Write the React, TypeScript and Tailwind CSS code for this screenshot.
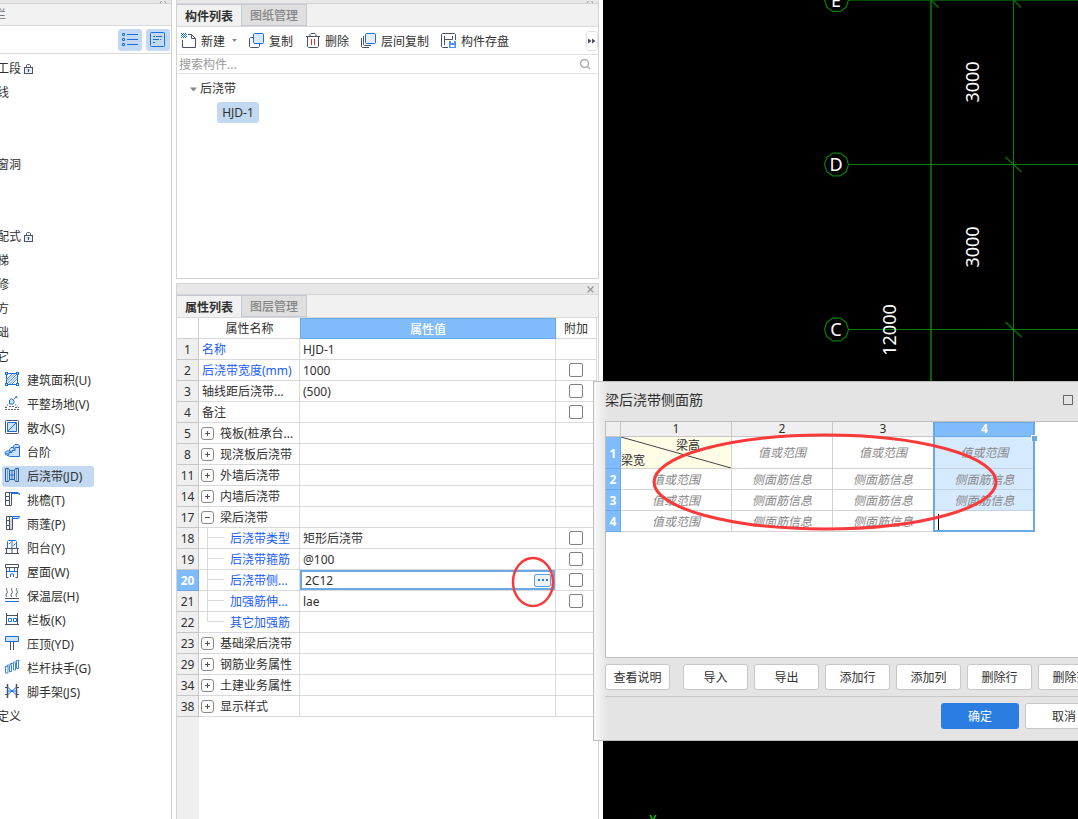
import React from "react";
import { clsx } from "clsx";

const BLUE = "#1a6fe0";
const SLATE = "#4a5068";

const Icon = ({ children }: { children: React.ReactNode }) => (
  <svg width="16" height="16" viewBox="0 0 16 16" fill="none" className="shrink-0" aria-hidden="true">
    {children}
  </svg>
);

const LockIcon = () => (
  <svg width="11" height="12" viewBox="0 0 11 12" fill="none" stroke={SLATE} className="ml-0.5 shrink-0" aria-hidden="true">
    <rect x="1.5" y="4.5" width="8" height="6" fill="#e8eefc" />
    <path d="M3.500 4.500V2.500l1-1h2l1 1v2M5.500 7v2" />
    <circle cx="5.500" cy="7" r="1" fill={SLATE} stroke="none" />
  </svg>
);

const AreaIcon = () => (
  <Icon>
    <path d="M2.500 2.500h11v11h-11z" stroke={BLUE} />
    <path d="M3 8l5-5M3 13L13 3M8 13l5-5M3 10.500l7.500-7.500M5.500 13l7.500-7.500" stroke={BLUE} strokeWidth="0.800" />
    <path d="M1 1h3v3H1zM12 1h3v3h-3zM1 12h3v3H1zM12 12h3v3h-3z" fill={BLUE} />
    <path d="M2 2h1v1H2zM13 2h1v1h-1zM2 13h1v1H2zM13 13h1v1h-1z" fill="#fff" />
  </Icon>
);

const GroundIcon = () => (
  <Icon>
    <path d="M13 1L9.500 4.500M11.500 1.500l2 1.500" stroke={BLUE} />
    <path d="M5.500 5l2-1.500 3 3-1.500 2.500H5.500z" stroke={BLUE} fill="#cfe2fb" />
    <path d="M4 9.500l-2.500 2M11 9.500l3.500 2.500" stroke={SLATE} strokeDasharray="1 1" />
    <path d="M5 11.500h5M1 12.500h3M11 12.500h4M1 14.500h14" stroke={SLATE} strokeDasharray="2 1" strokeWidth="0.900" />
  </Icon>
);

const ScatterIcon = () => (
  <Icon>
    <rect x="1.500" y="1.500" width="13" height="13" rx="1" stroke={SLATE} />
    <path d="M3.500 3.500h9v9h-9z" fill="#cfe2fb" stroke={BLUE} />
    <path d="M4 12l8-8" stroke={BLUE} />
  </Icon>
);

const StepsIcon = () => (
  <Icon>
    <path d="M1 9.500l1.500-1.500h3V6.500l1.500-2h2.500V3l1.500-1.500h3l1.500 1.500v10.500H6l-4.500-2z" fill="#cfe2fb" stroke={BLUE} />
    <path d="M1.500 10l3.500 1.500v-2h3V7.500h3V4.500h4M5.500 8l2.500 1.500M8.500 4.500l2.500 2" stroke={BLUE} />
  </Icon>
);

const StripIcon = () => (
  <Icon>
    <path d="M1.500 1.500h3l1 2v9l-1 2h-3zM14.500 1.500h-3l-1 2v9l1 2h3z" stroke="#2c5f96" />
    <path d="M3.500 2v12M12.500 2v12" stroke="#2c5f96" strokeOpacity=".5" />
    <path d="M5.500 3.500h5M5.500 8h5M5.500 12.500h5M8 3.500v9" stroke={BLUE} />
  </Icon>
);

const EavesIcon = () => (
  <Icon>
    <path d="M1.500 1.500h6v13h-6zM5.500 1.500v13M2 5.500h3.500M2 9.500h3.500" stroke={SLATE} />
    <path d="M7.500 1.500h6.500l2 2-2-1h-6.500z" stroke={BLUE} fill="#cfe2fb" />
  </Icon>
);

const CanopyIcon = () => (
  <Icon>
    <path d="M6 4h2v10H6z" fill="#d0d4dc" />
    <path d="M2.500 1.500h6v13h-6zM5.500 1.500v13M3 5.500h2.500M3 10.500h2.500" stroke={SLATE} />
    <path d="M8.500 1.500h7l-1 2h-6z" stroke={BLUE} fill="#cfe2fb" />
  </Icon>
);

const BalconyIcon = () => (
  <Icon>
    <path d="M3.500 9V2.500l1-1h7l1 1V9M8 1.500V9" stroke={BLUE} />
    <path d="M5 5l1.500-1.500M9.500 6.500l2-2" stroke={BLUE} />
    <path d="M1 9.500h14M2.500 9.500v5M8 9.500v5M13.500 9.500v5M1 14.500h14" stroke={SLATE} />
  </Icon>
);

const RoofIcon = () => (
  <Icon>
    <path d="M1.500 1.500h13v3h-13zM2.500 5v9.500h2M13.500 5v9.500h-2" stroke={SLATE} />
    <path d="M5.500 5v3M10.500 5v3M3 8.500h10M6.500 14v-3h3v3" stroke={BLUE} />
  </Icon>
);

const InsulationIcon = () => (
  <Icon>
    <path d="M3 1c-2 2 1.500 3 0 5s-1 3 0 4M8 1c-2 2 1.500 3 0 5s-1 3 0 4M13 1c-2 2 1.500 3 0 5s-1 3 0 4" stroke={SLATE} />
    <path d="M1 11.500h14" stroke={SLATE} />
    <path d="M1 14.500h14" stroke={BLUE} />
  </Icon>
);

const ParapetIcon = () => (
  <Icon>
    <path d="M2.500 2v11M13.500 2v11M2.500 4.500h11M1 13.500h14" stroke={SLATE} />
    <path d="M4.500 7.500h3v3h-3zM9.500 7.500h3v3h-3z" stroke={BLUE} />
  </Icon>
);

const CopingIcon = () => (
  <Icon>
    <path d="M1.500 1.500h13v5h-13z" stroke={BLUE} fill="#cfe2fb" />
    <path d="M6.500 7v8M9.500 7v8" stroke={SLATE} />
  </Icon>
);

const HandrailIcon = () => (
  <Icon>
    <path
      d="M1.500 7.500h2v-1.500h3V4.500h3V3h3V1.500h3M1.500 7.500v6.500h2.500V7M5.500 6.500v6h2V5.500M9.500 5v6h2V4M12.500 3v6.500h2V2"
      stroke="#3a86e8"
    />
  </Icon>
);

const ScaffoldIcon = () => (
  <Icon>
    <path d="M3.500 1v14M12.500 1v14" stroke={SLATE} strokeWidth="1.500" />
    <path d="M1 4.500h3M1 11.500h3M12 4.500h3M12 11.500h3" stroke={SLATE} />
    <path d="M4 4.500l8 7M12 4.500l-8 7M4 8h8" stroke={BLUE} />
  </Icon>
);

type NavEntry = { label: string; lock?: boolean };

// the tree is scrolled sideways, so only the tail of each group name shows
const groups: NavEntry[] = [
  { label: "工段", lock: true },
  { label: "线" },
  { label: "" },
  { label: "" },
  { label: "窗洞" },
  { label: "" },
  { label: "" },
  { label: "配式", lock: true },
  { label: "梯" },
  { label: "修" },
  { label: "方" },
  { label: "础" },
  { label: "它" },
];

const components = [
  { label: "建筑面积(U)", icon: <AreaIcon /> },
  { label: "平整场地(V)", icon: <GroundIcon /> },
  { label: "散水(S)", icon: <ScatterIcon /> },
  { label: "台阶", icon: <StepsIcon /> },
  { label: "后浇带(JD)", icon: <StripIcon />, active: true },
  { label: "挑檐(T)", icon: <EavesIcon /> },
  { label: "雨蓬(P)", icon: <CanopyIcon /> },
  { label: "阳台(Y)", icon: <BalconyIcon /> },
  { label: "屋面(W)", icon: <RoofIcon /> },
  { label: "保温层(H)", icon: <InsulationIcon /> },
  { label: "栏板(K)", icon: <ParapetIcon /> },
  { label: "压顶(YD)", icon: <CopingIcon /> },
  { label: "栏杆扶手(G)", icon: <HandrailIcon /> },
  { label: "脚手架(JS)", icon: <ScaffoldIcon /> },
];

const Sidebar = () => (
  <nav className="flex w-43 shrink-0 flex-col overflow-hidden border-r border-[#d0d0d0]">
    <div className="flex h-1 shrink-0 items-end justify-end border-b border-[#d4d4d4] bg-[#e8e8e8] pr-1">
      <svg width="8" height="2" viewBox="0 0 8 2" stroke="#999" aria-hidden="true">
        <path d="M2.500 0L1 2M5.500 0L7 2" />
      </svg>
    </div>
    <div className="flex h-[22px] shrink-0 items-center border-b border-[#d9d9d9] bg-[#f2f2f2] text-[#777]">
      <span className="-ml-1.5">栏</span>
    </div>
    <div className="flex h-7 shrink-0 items-center justify-end gap-1 border-b border-[#d9d9d9] pr-px">
      <button aria-label="列表" className="flex h-[22px] w-6 items-center justify-center rounded-[3px] bg-[#c2d9f1]">
        <Icon>
          <path d="M.5 1.500h2v2h-2zM.5 6.500h2v2h-2zM.5 11.500h2v2h-2z" stroke={BLUE} />
          <path d="M5 2.500h11M5 7.500h11M5 12.500h11" stroke={BLUE} />
        </Icon>
      </button>
      <button aria-label="详情" className="flex h-[22px] w-6 items-center justify-center rounded-[3px] bg-[#c2d9f1]">
        <Icon>
          <rect x=".5" y=".5" width="14" height="14" rx="1" stroke={BLUE} />
          <path d="M3 4.500h2M6 4.500h6M3 7.500h6M10 7.500h1M3 10.500h2" stroke={BLUE} />
        </Icon>
      </button>
    </div>
    <ul className="pt-[3px]">
      {groups.map((g, i) => (
        <li key={i} className="-ml-[3px] flex h-6 items-center">
          {g.label}
          {g.lock && <LockIcon />}
        </li>
      ))}
      {components.map((c) => (
        <li key={c.label} className="flex h-6 items-start pt-px pl-0.5">
          <button
            className={clsx(
              "flex h-[21px] items-start gap-[7px] rounded-[3px] pt-px pr-3 pl-0.5 leading-5",
              c.active && "bg-[#c2d9f1]"
            )}
          >
            {c.icon}
            {c.label}
          </button>
        </li>
      ))}
      <li className="-ml-[3px] flex h-6 items-center">定义</li>
    </ul>
  </nav>
);

const Tabs = ({ active, other }: { active: string; other: string }) => (
  <div className="flex h-[23px] shrink-0 border-b border-[#d9d9d9] bg-[#f1f1f1]" role="tablist">
    <button role="tab" aria-selected="true" className="w-16 border-t border-[#c4c9d2] pt-0.5 font-bold">
      {active}
    </button>
    <button
      role="tab"
      aria-selected="false"
      className="w-[66px] border border-[#c4c9d2] bg-[#dfdfdf] pt-0.5 font-medium text-[#858585]"
    >
      {other}
    </button>
  </div>
);

const ToolButton = ({ label, children }: { label: string; children: React.ReactNode }) => (
  <button className="flex shrink-0 items-center gap-1">
    <Icon>{children}</Icon>
    <span className="pt-0.5">{label}</span>
  </button>
);

const ComponentPanel = () => (
  <section className="flex h-[279px] shrink-0 flex-col border-x border-b border-[#d4d4d4]">
    <div className="flex h-1 shrink-0 items-end justify-end overflow-hidden border-b border-[#d4d4d4] bg-[#e8e8e8] pr-1">
      <svg width="8" height="2" viewBox="0 0 8 2" stroke="#999" aria-hidden="true">
        <path d="M2.500 0L1 2M5.500 0L7 2" />
      </svg>
    </div>
    <Tabs active="构件列表" other="图纸管理" />
    <div className="flex h-7 shrink-0 items-center border-b border-[#e2e2e2] pl-1">
      <div className="flex flex-1 items-center gap-3">
        <div className="flex items-center gap-[7px]">
          <ToolButton label="新建">
            <path d="M1.500 7v7.500h13V5.500l-4-4H7M10.500 1.500v4h4" stroke={SLATE} />
            <path d="M0 .5h6M0 2.500h6M0 4.500h6" stroke={BLUE} strokeDasharray="1 1" />
            <path d="M1 1.500h5M1 3.500h5" stroke={BLUE} strokeDasharray="1 1" />
          </ToolButton>
          <svg width="5" height="3" viewBox="0 0 5 3" aria-hidden="true">
            <path d="M0 0h5L2.500 3z" fill="#888" />
          </svg>
        </div>
        <ToolButton label="复制">
          <path d="M4 4.500H1.500l-1 1v8l1 1h8l1-1V11" stroke={SLATE} />
          <rect x="4.500" y=".5" width="10" height="10" rx="1" fill="#d9e7fd" stroke={BLUE} />
        </ToolButton>
        <ToolButton label="删除">
          <path d="M1 3.500h14M2.500 3.500v10l1 1h9l1-1v-10M5 3V1.500l1-1h4l1 1V3" stroke={SLATE} />
          <path d="M6.500 6v6M9.500 6v6" stroke="#e03030" />
        </ToolButton>
        <ToolButton label="层间复制">
          <path d="M.5 5v8.500l1 1H8M2.500 3v8.500l1 1H10" stroke={SLATE} />
          <rect x="4.500" y=".5" width="10" height="10" rx="1" fill="#e4eefe" stroke={BLUE} />
        </ToolButton>
        <ToolButton label="构件存盘">
          <path d="M7 14.500H1.500l-1-1v-12l1-1h12l1 1V7M3.500 3v9M3.500 6.500h8M11.500 3v3.500" stroke={SLATE} />
          <path d="M8 8h7v7H8z" fill="#4f93ea" />
          <path d="M10 8h3v2h-3zM9.500 12h4v2h-4z" fill="#fff" />
        </ToolButton>
      </div>
      <button aria-label="更多" className="flex h-5 w-3 items-center justify-center rounded-[3px] border border-[#e2e2e2]">
        <svg width="8" height="6" viewBox="0 0 8 6" fill={SLATE} className="shrink-0" aria-hidden="true">
          <path d="M0 .5L3.500 3 0 5.500zM4 .5L7.500 3 4 5.500z" />
        </svg>
      </button>
    </div>
    <div className="flex h-[19px] shrink-0 items-center border-b border-[#e2e2e2] pr-[7px] pl-0.5">
      <input
        aria-label="搜索构件"
        placeholder="搜索构件..."
        className="min-w-0 flex-1 bg-transparent pt-0.5 leading-4 outline-none placeholder:text-[#9a9a9a]"
      />
      <svg width="12" height="12" viewBox="0 0 12 12" fill="none" stroke="#a8a8a8" strokeWidth="1.400" aria-hidden="true">
        <circle cx="5.500" cy="5.500" r="4" />
        <path d="M8.500 8.500L11 11" />
      </svg>
    </div>
    <ul className="pt-[3px]">
      <li className="flex h-6 items-center gap-[3px] pl-[13px]">
        <svg width="7" height="5" viewBox="0 0 7 5" aria-hidden="true">
          <path d="M0 .5h7L3.500 4.500z" fill="#888" />
        </svg>
        后浇带
      </li>
      <li className="flex h-6 items-start pt-px pl-10">
        <button className="h-[21px] w-[42px] rounded-[3px] bg-[#c2d9f1]">HJD-1</button>
      </li>
    </ul>
  </section>
);

type Prop = {
  no: number;
  name: string;
  value?: string;
  kind?: "group" | "open" | "child" | "last";
  blue?: boolean;
  check?: boolean;
};

const props: Prop[] = [
  { no: 1, name: "名称", value: "HJD-1", blue: true },
  { no: 2, name: "后浇带宽度(mm)", value: "1000", blue: true, check: true },
  { no: 3, name: "轴线距后浇带...", value: "(500)", check: true },
  { no: 4, name: "备注", check: true },
  { no: 5, name: "筏板(桩承台...", kind: "group" },
  { no: 8, name: "现浇板后浇带", kind: "group" },
  { no: 11, name: "外墙后浇带", kind: "group" },
  { no: 14, name: "内墙后浇带", kind: "group" },
  { no: 17, name: "梁后浇带", kind: "open" },
  { no: 18, name: "后浇带类型", value: "矩形后浇带", kind: "child", blue: true, check: true },
  { no: 19, name: "后浇带箍筋", value: "@100", kind: "child", blue: true, check: true },
  { no: 20, name: "后浇带侧...", value: "2C12", kind: "child", blue: true, check: true },
  { no: 21, name: "加强筋伸...", value: "lae", kind: "child", blue: true, check: true },
  { no: 22, name: "其它加强筋", kind: "last", blue: true },
  { no: 23, name: "基础梁后浇带", kind: "group" },
  { no: 29, name: "钢筋业务属性", kind: "group" },
  { no: 34, name: "土建业务属性", kind: "group" },
  { no: 38, name: "显示样式", kind: "group" },
];

const Branch = ({ last }: { last?: boolean }) => (
  <svg width="28" height="20" viewBox="0 0 28 20" stroke="#d9d9d9" className="shrink-0" aria-hidden="true">
    <path d={last ? "M5.500 0v10" : "M5.500 0v20"} />
    <path d="M6 9.500h16" />
  </svg>
);

const Expander = ({ open }: { open: boolean }) => (
  <button
    aria-label={open ? "收起" : "展开"}
    className="mr-1.5 flex size-[13px] shrink-0 items-center justify-center rounded-[3px] border border-[#8a8a8a] bg-white"
  >
    <svg width="5" height="5" viewBox="0 0 5 5" stroke="#555" aria-hidden="true">
      <path d={open ? "M0 2.500h5" : "M0 2.500h5M2.500 0v5"} />
    </svg>
  </button>
);

const PropertyRow = ({ p }: { p: Prop }) => {
  const editing = p.no === 20;
  return (
    <tr className="h-[21px]">
      <th
        scope="row"
        className={clsx(
          "border-r border-b p-0 pt-0.5",
          editing ? "border-[#6aa9e6] bg-[#80bbfb] font-bold text-white" : "border-[#c6c6c6] bg-[#efefef] font-normal"
        )}
      >
        {p.no}
      </th>
      <td className="border-r border-b border-[#d9d9d9] p-0">
        <div
          className={clsx(
            "flex h-5 items-center whitespace-nowrap",
            p.blue && "text-[#1a5cff]",
            p.kind === "group" || p.kind === "open" ? "pl-0.5" : "pl-[3px]"
          )}
        >
          {(p.kind === "group" || p.kind === "open") && <Expander open={p.kind === "open"} />}
          {(p.kind === "child" || p.kind === "last") && <Branch last={p.kind === "last"} />}
          <span className="pt-0.5">{p.name}</span>
        </div>
      </td>
      <td className="border-r border-b border-[#d9d9d9] p-0">
        {editing ? (
          <div className="flex h-5 items-center border-2 border-[#6aa9e6] pr-0.5 pl-[3px]">
            <input
              aria-label="后浇带侧面筋"
              defaultValue={p.value}
              className="h-4 min-w-0 flex-1 pt-0.5 leading-4 outline-none"
            />
            <button
              aria-label="编辑"
              className="flex h-[13px] w-[17px] items-center justify-center rounded-[2px] border border-[#5a9fe6] bg-[#eef1f7]"
            >
              <svg width="10" height="2" viewBox="0 0 10 2" fill="#2b7de9" aria-hidden="true">
                <path d="M0 0h2v2H0zM4 0h2v2H4zM8 0h2v2H8z" />
              </svg>
            </button>
          </div>
        ) : (
          <div className="flex h-5 items-center pt-0.5 pl-[3px]">{p.value}</div>
        )}
      </td>
      <td className="border-r border-b border-[#d9d9d9] p-0">
        {p.check && (
          <input
            type="checkbox"
            aria-label={`附加 ${p.name}`}
            className="mx-auto block size-3.5 appearance-none rounded-[2px] border border-[#808080] bg-white"
          />
        )}
      </td>
    </tr>
  );
};

const PropertyPanel = () => (
  <section className="mt-1 flex flex-1 flex-col border-x border-t border-[#d4d4d4]">
    <div className="flex h-[11px] shrink-0 items-center justify-end border-b border-[#d4d4d4] bg-[#e8e8e8] pr-1">
      <button aria-label="关闭">
        <svg width="7" height="7" viewBox="0 0 7 7" stroke="#999" strokeWidth="1.200" className="block" aria-hidden="true">
          <path d="M.5.5l6 6M6.500.5l-6 6" />
        </svg>
      </button>
    </div>
    <Tabs active="属性列表" other="图层管理" />
    <table className="w-[420px] table-fixed border-separate border-spacing-0">
      <colgroup>
        <col className="w-[22px]" />
        <col className="w-[101px]" />
        <col />
        <col className="w-[41px]" />
      </colgroup>
      <thead>
        <tr className="h-[21px]">
          <td className="border-r border-b border-[#d0d0d0] p-0" />
          <th scope="col" className="border-b border-[#d9d9d9] p-0 pt-0.5 font-normal">属性名称</th>
          <th scope="col" className="border border-[#6aa9e6] bg-[#80bbfb] p-0 pt-0.5 font-medium text-white">属性值</th>
          <th scope="col" className="border-r border-b border-[#d9d9d9] p-0 pt-0.5 font-normal">附加</th>
        </tr>
      </thead>
      <tbody>
        {props.map((p) => (
          <PropertyRow key={p.no} p={p} />
        ))}
      </tbody>
    </table>
    <div className="w-[22px] flex-1 bg-[#efefef]" />
  </section>
);

// regular decagon used for axis bubbles
const bubble = (cx: number, cy: number) =>
  Array.from({ length: 10 }, (_, i) => {
    const a = (i * Math.PI) / 5;
    return `${cx + 12 * Math.cos(a)},${cy + 12 * Math.sin(a)}`;
  }).join(" ");

const Drawing = () => (
  <main className="min-w-0 flex-1 overflow-hidden bg-black">
    <svg width="100%" height="100%" className="block" fill="none">
      <g stroke="#008000">
        <path d="M328 0v494" stroke="#006400" strokeWidth="2" />
        <path d="M410.500 0v494" />
        <path d="M246 .5h1200" stroke="#004d00" />
        <path d="M246 164.500h1200M246 329.500h1200" />
        <path d="M402.500 157l16 15M402.500 322l16 15M328 0l7.500 7.500M410.500 0l7.500 7.500" strokeWidth="1.200" />
        <g strokeWidth="1.200">
          <polygon points={bubble(233.5, 0)} />
          <polygon points={bubble(233.5, 164.5)} />
          <polygon points={bubble(233.5, 329.5)} />
        </g>
      </g>
      <g fill="#fff" fontSize="18" textAnchor="middle">
        <text x="233" y="7">E</text>
        <text x="233" y="171">D</text>
        <text x="233" y="336">C</text>
        <text transform="translate(376 82) rotate(-90)">3000</text>
        <text transform="translate(376 247) rotate(-90)">3000</text>
        <text transform="translate(293 330) rotate(-90)">12000</text>
      </g>
      <text x="50" y="824" fill="#00ff00" fontSize="12" textAnchor="middle">Y</text>
    </svg>
  </main>
);

const gridRows = [
  { no: 2, cells: ["值或范围", "侧面筋信息", "侧面筋信息", "侧面筋信息"] },
  { no: 3, cells: ["值或范围", "侧面筋信息", "侧面筋信息", "侧面筋信息"] },
  { no: 4, cells: ["值或范围", "侧面筋信息", "侧面筋信息", ""] },
];

const actions = ["导入", "导出", "添加行", "添加列", "删除行", "删除列"];

const RebarGrid = () => (
  <div className="h-[237px] shrink-0 border border-[#bdbdbd] bg-white">
    <div className="relative w-[429px]">
      <table className="w-full table-fixed border-separate border-spacing-0">
        <colgroup>
          <col className="w-[15px]" />
          <col className="w-[111px]" />
          <col className="w-[101px]" />
          <col className="w-[101px]" />
          <col className="w-[101px]" />
        </colgroup>
        <thead>
          <tr className="h-[15px] leading-[14px]">
            <td className="border-r border-b border-[#c6c6c6] bg-[#efefef] p-0" />
            {["1", "2", "3"].map((n) => (
              <th key={n} scope="col" className="border-r border-b border-[#c6c6c6] bg-[#efefef] p-0 font-normal">
                {n}
              </th>
            ))}
            <th scope="col" className="border-b border-[#6aa9e6] bg-[#80bbfb] p-0 font-bold text-white">4</th>
          </tr>
        </thead>
        <tbody>
          <tr className="h-8">
            <th scope="row" className="border-r border-b border-[#6aa9e6] bg-[#80bbfb] p-0 pt-0.5 font-bold text-white">1</th>
            <td className="border-r border-b border-[#d2d2d2] bg-[#fffde6] p-0">
              <div className="relative flex h-[31px] flex-col justify-end leading-[15px]">
                <svg className="absolute inset-0 size-full" viewBox="0 0 110 31" preserveAspectRatio="none" stroke="#444" aria-hidden="true">
                  <path d="M0 0l110 31" />
                </svg>
                <span className="pr-[31px] text-right">梁高</span>
                <span>梁宽</span>
              </div>
            </td>
            <td className="border-r border-b border-[#d2d2d2] p-0 text-center text-[#888] italic">值或范围</td>
            <td className="border-r border-b border-[#d2d2d2] p-0 text-center text-[#888] italic">值或范围</td>
            <td className="border-b border-[#c4d2e0] bg-[#d6eaff] p-0 text-center text-[#888] italic">值或范围</td>
          </tr>
          {gridRows.map((r) => (
            <tr key={r.no} className="h-[21px]">
              <th scope="row" className="border-r border-b border-[#6aa9e6] bg-[#80bbfb] p-0 pt-0.5 font-bold text-white">
                {r.no}
              </th>
              {r.cells.map((c, i) => (
                <td
                  key={i}
                  className={clsx(
                    "border-b p-0 pt-0.5 text-center text-[#888] italic",
                    i < 3 && "border-r border-[#d2d2d2]",
                    i === 3 && "border-[#c4d2e0]",
                    i === 3 && c && "bg-[#d6eaff]"
                  )}
                >
                  {c || <span className="ml-1 block h-4 w-px bg-black" />}
                </td>
              ))}
            </tr>
          ))}
        </tbody>
      </table>
      {/* selected column frame + drag handle */}
      <div className="pointer-events-none absolute top-0 right-0 bottom-0 w-[102px] border-2 border-t border-[#6aa9e6]">
        <span className="absolute top-3 -right-1 size-[6px] border-t border-l border-white bg-[#6aa9e6]" />
      </div>
    </div>
  </div>
);

const RebarDialog = () => (
  <div
    role="dialog"
    aria-label="梁后浇带侧面筋"
    className="absolute top-[381px] left-[593px] flex h-[360px] w-[522px] flex-col border border-[#bcbcbc] bg-[#e4e4e4] bg-linear-to-r from-[#f8f8f8] to-[#e4e4e4] to-[14px] px-[11px]"
  >
    <div className="flex h-[39px] shrink-0 items-center justify-between pr-[30px] pb-[3px] text-sm">
      <h2>梁后浇带侧面筋</h2>
      <button aria-label="最大化" className="size-2.5 border border-[#666]" />
    </div>
    <RebarGrid />
    <div className="mt-1.5 flex gap-[6px] border-b border-[#c8c8c8] pb-1.5">
      <button className="mr-[7px] h-[26px] w-[65px] shrink-0 rounded-[3px] border border-[#c8c8c8] bg-white pt-0.5">
        查看说明
      </button>
      {actions.map((a) => (
        <button key={a} className="h-[26px] w-[65px] shrink-0 rounded-[3px] border border-[#c8c8c8] bg-white pt-0.5">
          {a}
        </button>
      ))}
    </div>
    <div className="mt-1.5 flex justify-end gap-[6px]">
      <button className="h-[26px] w-[78px] rounded-[3px] bg-[#2b7de1] pt-0.5 text-white">确定</button>
      <button className="h-[26px] w-[78px] rounded-[3px] border border-[#c8c8c8] bg-white pt-0.5">取消</button>
    </div>
  </div>
);

export default function App() {
  return (
    <div className="relative flex h-screen overflow-hidden bg-white font-['Noto_Sans','Noto_Sans_CJK_SC',sans-serif] text-xs leading-4 text-[#303030]">
      <Sidebar />
      <div className="mx-1 flex w-[423px] shrink-0 flex-col">
        <ComponentPanel />
        <PropertyPanel />
      </div>
      <Drawing />
      <RebarDialog />
      <svg className="pointer-events-none absolute inset-0 size-full" fill="none" stroke="#f93a3a" aria-hidden="true">
        <ellipse cx="533" cy="582" rx="20" ry="24" strokeWidth="2.500" />
        <ellipse cx="825" cy="482" rx="171" ry="47" strokeWidth="3" />
      </svg>
    </div>
  );
}
